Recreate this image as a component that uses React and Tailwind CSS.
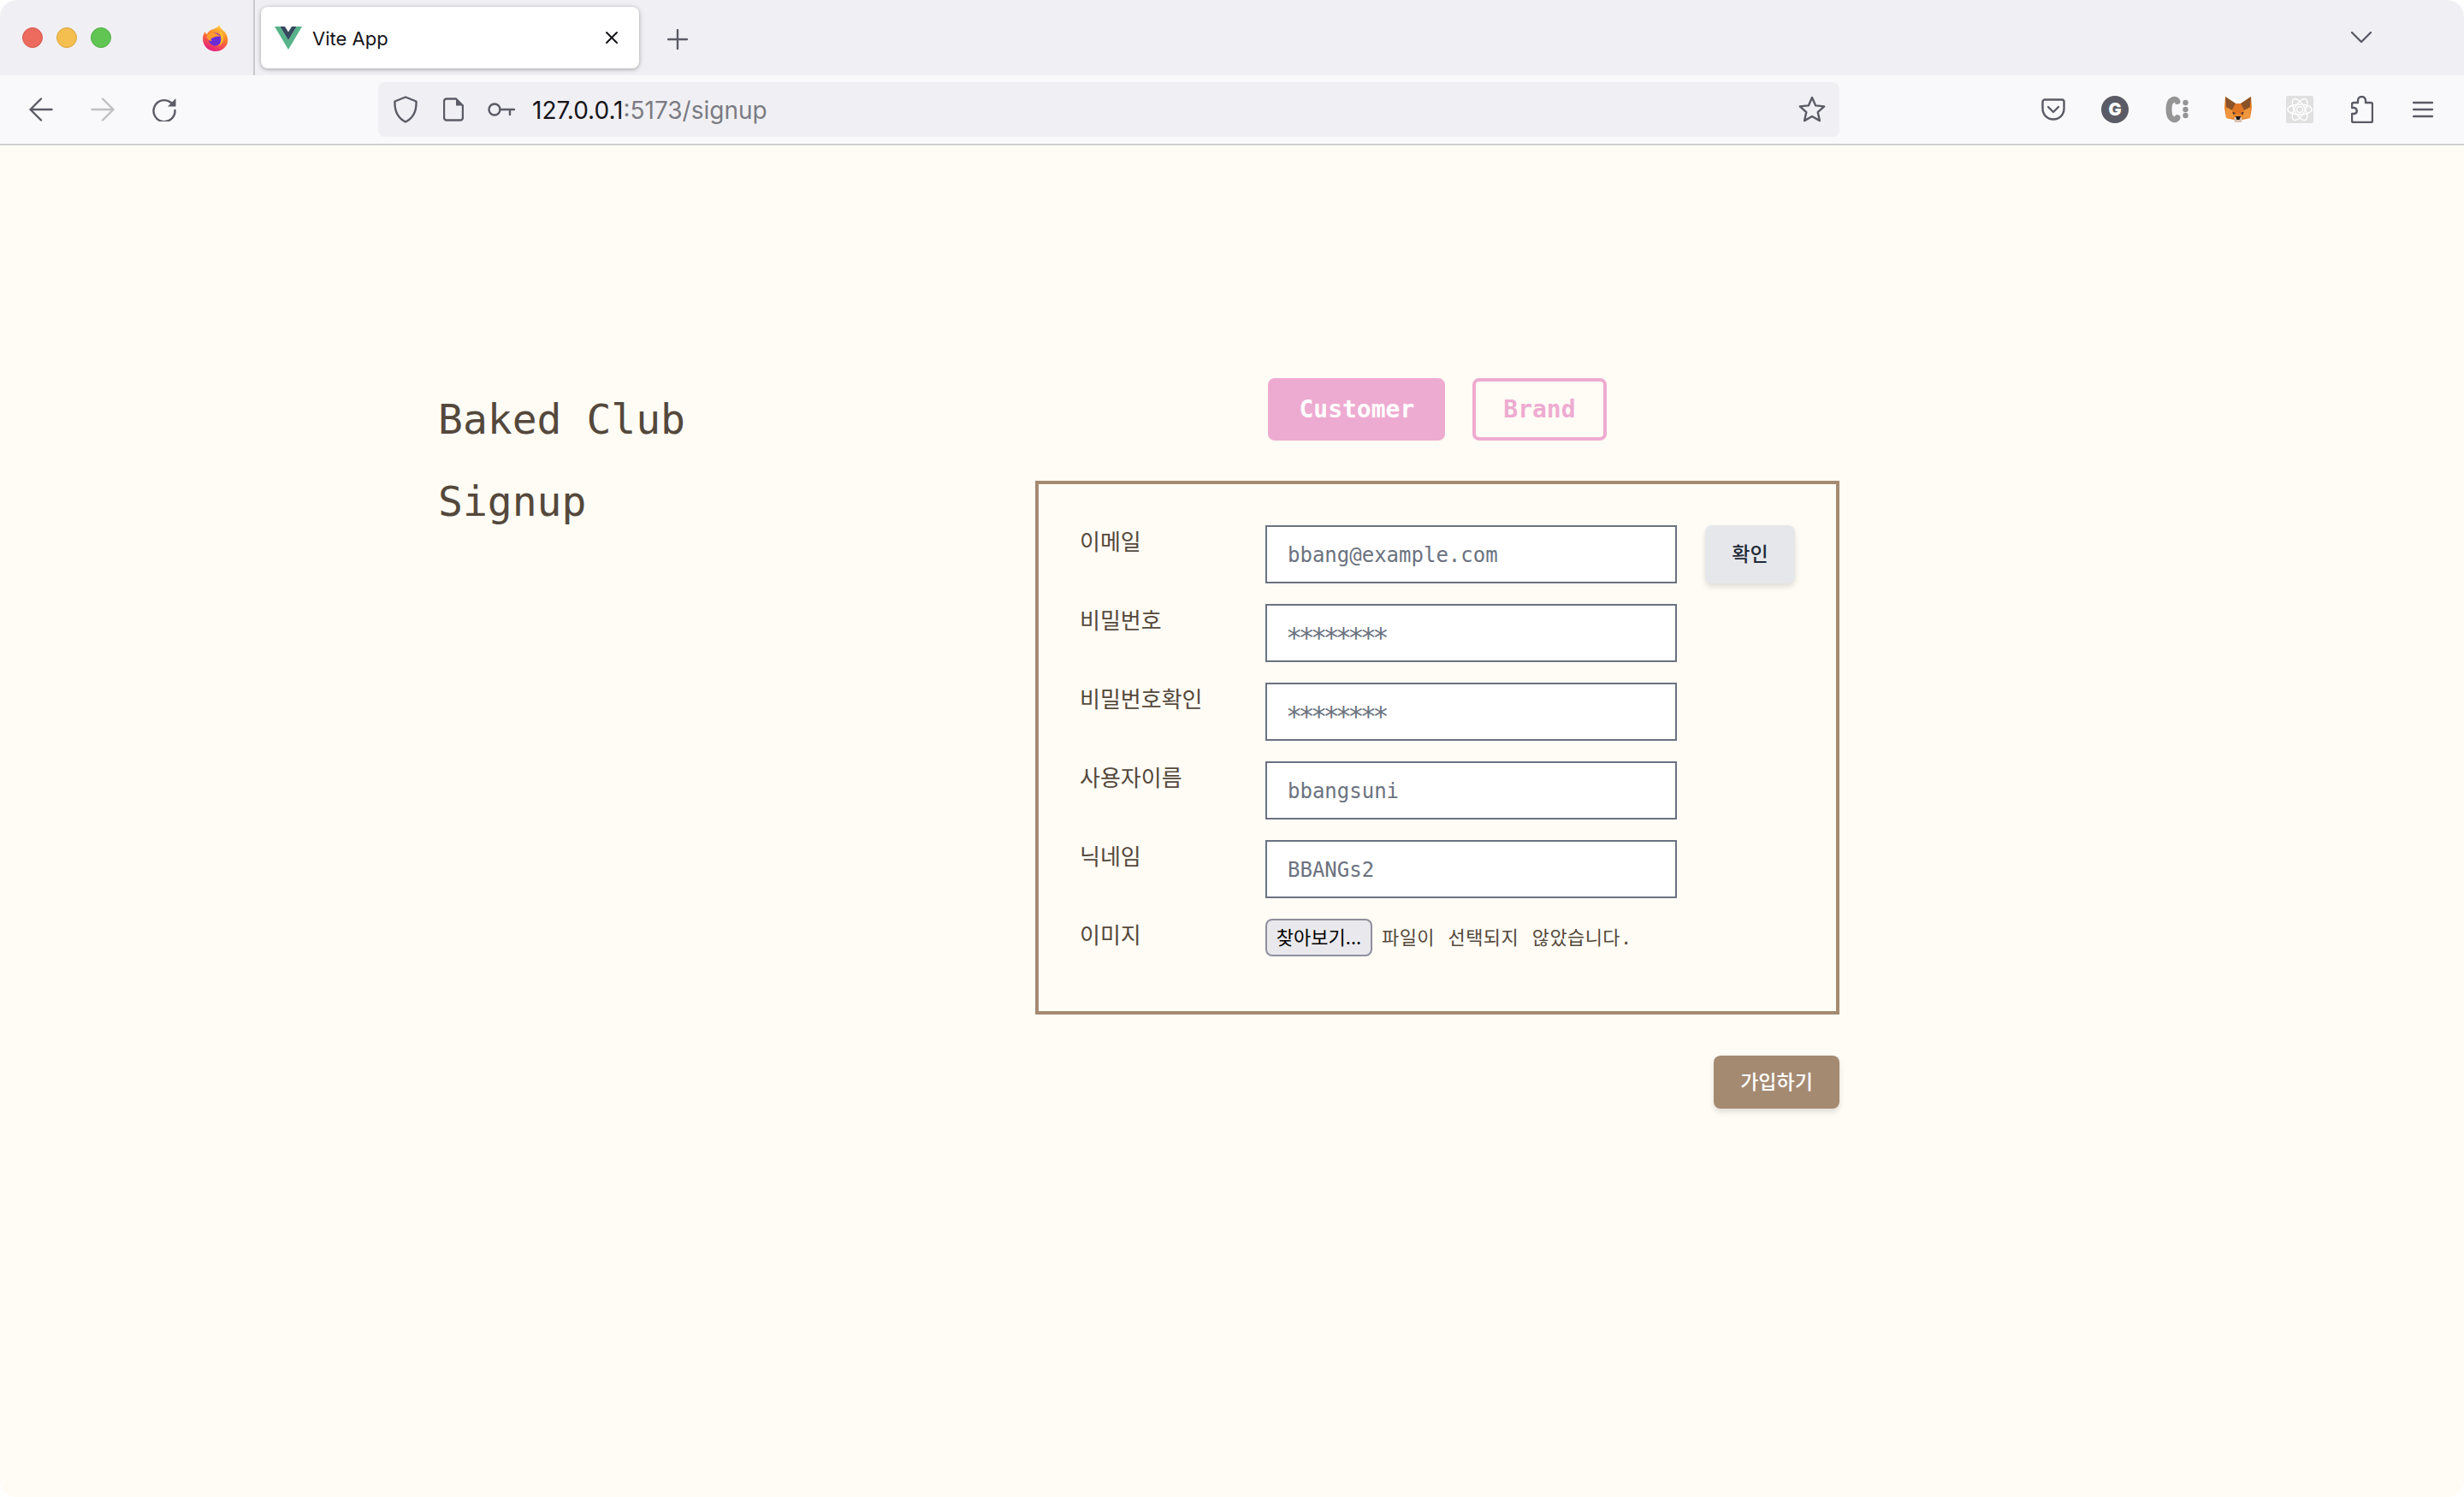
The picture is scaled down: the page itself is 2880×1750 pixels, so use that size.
const mono = { fontFamily: '"DejaVu Sans Mono", "Noto Sans CJK KR", monospace' };

const fields = [
  { label: '이메일', value: 'bbang@example.com', check: true },
  { label: '비밀번호', value: '********', secret: true },
  { label: '비밀번호확인', value: '********', secret: true },
  { label: '사용자이름', value: 'bbangsuni' },
  { label: '닉네임', value: 'BBANGs2' },
];

const FirefoxLogo = () => (
  <svg width="32" height="32" viewBox="0 0 32 32">
    <defs>
      <linearGradient id="fx" x1="0.7" y1="0" x2="0.3" y2="1">
        <stop offset="0" stopColor="#ffd23a" />
        <stop offset="0.45" stopColor="#ff7a2b" />
        <stop offset="1" stopColor="#e31587" />
      </linearGradient>
    </defs>
    <path d="M20 1c1 4 5 6 8 10 3 5 3 11 0 15-3 4-7 6-12 6C8 32 1 26 1 17c0-3 1-6 3-8 0 2 1 3 2 3 1-3 4-5 7-6 3-1 6-2 7-5z" fill="url(#fx)" />
    <circle cx="15.5" cy="18" r="7.5" fill="#6b2bd6" />
    <path d="M6 13c3-3 8-3 12-1 2 1 3 2 3 3-3-1-5 0-8 1-3 1-3 3-1 4-4 0-7-3-6-7z" fill="#ff9a2e" />
    <path d="M21 8c3 2 5 6 4 11-1 3-3 6-6 7 3-3 4-7 3-11-.4-3-1-5-1-7z" fill="#ffbd2e" />
  </svg>
);

const VueLogo = () => (
  <svg width="32" height="27" viewBox="0 0 32 27">
    <polygon points="0,0 6.4,0 16,16 25.6,0 32,0 16,27" fill="#56b38a" />
    <polygon points="6.4,0 12,0 16,6.5 20,0 25.6,0 16,16" fill="#35495e" />
  </svg>
);

const FoxLogo = () => (
  <svg width="32" height="32" viewBox="0 0 32 32">
    <polygon points="1,1 13,9 19,9 31,1 32,14 30,26 21,28 11,28 2,26 0,14" fill="#e8832a" />
    <polygon points="1,1 13,9 9,17 2,13" fill="#8a5228" />
    <polygon points="31,1 19,9 23,17 30,13" fill="#8a5228" />
    <polygon points="9,17 13,9 19,9 23,17 18,21 14,21" fill="#e27625" />
    <polygon points="7,18 13,20 11,22" fill="#45312a" />
    <polygon points="25,18 19,20 21,22" fill="#45312a" />
    <polygon points="2,14 9,17 11,26 2,26" fill="#f0963c" />
    <polygon points="30,14 23,17 21,26 30,26" fill="#f0963c" />
    <polygon points="11,26 14,24 18,24 21,26 20,31 12,31" fill="#d7c1b3" />
    <polygon points="13,24 19,24 17.5,28 14.5,28" fill="#161616" />
  </svg>
);

const ReactLogo = () => (
  <svg width="32" height="32" viewBox="0 0 32 32">
    <rect width="32" height="32" rx="2" fill="#e0e0e0" />
    <g fill="none" stroke="#ffffff" strokeWidth="1.4">
      <ellipse cx="16" cy="16" rx="14" ry="6" />
      <ellipse cx="16" cy="16" rx="14" ry="6" transform="rotate(60 16 16)" />
      <ellipse cx="16" cy="16" rx="14" ry="6" transform="rotate(120 16 16)" />
      <circle cx="16" cy="16" r="3.5" />
    </g>
  </svg>
);

const Stroke = ({ w, h, children, color = '#5b5b66', sw = 2.4 }) => (
  <svg width={w} height={h} viewBox={`0 0 ${w} ${h}`} fill="none" stroke={color} strokeWidth={sw} strokeLinecap="round" strokeLinejoin="round">
    {children}
  </svg>
);

const TabBar = () => (
  <div className="flex h-[88px] items-center bg-[#f0f0f4]">
    <div className="ml-[26px] flex gap-4">
      <span className="h-6 w-6 rounded-full border border-[#d8574c] bg-[#ec6a5e]" />
      <span className="h-6 w-6 rounded-full border border-[#d9a33f] bg-[#f5bf4f]" />
      <span className="h-6 w-6 rounded-full border border-[#50ad45] bg-[#61c554]" />
    </div>
    <div className="ml-[106px] flex h-8 w-8 items-center justify-center">
      <FirefoxLogo />
    </div>
    <div className="ml-[28px] h-full w-[2px] bg-[#c9c9cc]" />
    <div className="ml-[7px] flex h-[72px] w-[442px] items-center rounded-lg bg-white pl-4 pr-[24px] shadow-[0_1px_5px_rgba(0,0,0,0.35)]">
      <VueLogo />
      <span className="ml-3 mt-[2px] text-[22px] text-[#15141a]" style={{ fontFamily: 'Inter, sans-serif' }}>Vite App</span>
      <span className="ml-auto">
        <Stroke w={16} h={16} color="#15141a" sw={2}>
          <path d="M2 2l12 12M14 2L2 14" />
        </Stroke>
      </span>
    </div>
    <div className="ml-[33px] mt-[4px]">
      <Stroke w={24} h={24}>
        <path d="M12 1v22M1 12h22" />
      </Stroke>
    </div>
    <div className="ml-auto mr-[108px]">
      <Stroke w={24} h={14}>
        <path d="M1 1l11 11L23 1" />
      </Stroke>
    </div>
  </div>
);

const Toolbar = () => (
  <div className="flex h-[82px] items-center border-b-2 border-[#cfcfd0] bg-[#f9f9fb]">
    <div className="ml-[34px]">
      <Stroke w={28} h={28}>
        <path d="M1.5 14h25M14 1.5L1.5 14 14 26.5" />
      </Stroke>
    </div>
    <div className="ml-[44px]">
      <Stroke w={28} h={28} color="#bfbfc4">
        <path d="M1.5 14h25M14 1.5L26.5 14 14 26.5" />
      </Stroke>
    </div>
    <div className="ml-[44px]">
      <svg width="28" height="28" viewBox="0 0 28 28" fill="none">
        <path d="M22 6A12.5 12.5 0 1 0 26.5 15" stroke="#5b5b66" strokeWidth="2.4" strokeLinecap="round" />
        <polygon points="27.5,1 27.5,10.500 18,10.500" fill="#5b5b66" />
      </svg>
    </div>
    <div className="ml-[236px] flex h-16 w-[1708px] items-center rounded-lg bg-[#f0f0f4] pl-[18px] pr-[16px]">
      <Stroke w={28} h={32}>
        <path d="M14 1.500L26.500 6.500C27 17 23 26 14 30.500 5 26 1 17 1.500 6.500z" />
      </Stroke>
      <div className="ml-[30px]">
        <svg width="24" height="28" viewBox="0 0 24 28" fill="none">
          <path d="M15 1.500H4a3 3 0 0 0-3 3v19a3 3 0 0 0 3 3h16a3 3 0 0 0 3-3V9.500z" stroke="#5b5b66" strokeWidth="2.400" strokeLinejoin="round" />
          <polygon points="15,1.500 23,9.500 15,9.500" fill="#5b5b66" />
        </svg>
      </div>
      <div className="ml-[28px]">
        <Stroke w={32} h={16}>
          <circle cx="8" cy="8" r="6.500" />
          <path d="M14.500 8H31M26 8v6" />
        </Stroke>
      </div>
      <span className="ml-[20px] mt-[2px] text-[28px] leading-none text-[#15141a]" style={{ fontFamily: 'Inter, sans-serif' }}>
        127.0.0.1<span className="text-[#7b7b83]">:5173/signup</span>
      </span>
      <div className="ml-auto">
        <Stroke w={32} h={32}>
          <path d="M16 2l4.200 9.400 10 1-7.500 6.700 2.200 10L16 24l-8.900 5.100 2.200-10L1.800 12.400l10-1z" />
        </Stroke>
      </div>
    </div>
    <div className="ml-[236px]">
      <Stroke w={28} h={26}>
        <path d="M4 1.500h20a2.500 2.500 0 0 1 2.500 2.500v8C26.500 19 21 24.500 14 24.500S1.500 19 1.500 12V4A2.500 2.500 0 0 1 4 1.500z" />
        <path d="M8 10l6 6 6-6" />
      </Stroke>
    </div>
    <div className="ml-[42px] flex h-8 w-8 items-center justify-center rounded-full bg-[#5b5b66] text-[20px] font-black text-white" style={{ fontFamily: 'Inter, sans-serif' }}>
      G
    </div>
    <div className="ml-[42px]">
      <svg width="28" height="32" viewBox="0 0 28 32" fill="none">
        <path d="M15 6.500C14 3 5 2 5 16s9 13 10 9.500" stroke="#959595" strokeWidth="7" strokeLinecap="round" />
        <circle cx="24.500" cy="8" r="3.200" fill="#959595" />
        <circle cx="24.500" cy="16" r="3.200" fill="#959595" />
        <circle cx="24.500" cy="23" r="3.200" fill="#959595" />
      </svg>
    </div>
    <div className="ml-[42px]"><FoxLogo /></div>
    <div className="ml-10"><ReactLogo /></div>
    <div className="ml-[44px]">
      <Stroke w={26} h={32}>
        <path d="M3 31h20a2 2 0 0 0 2-2V10a2 2 0 0 0-2-2h-6V5.500C17 -0.500 8 -0.500 8 5.500V8H3a2 2 0 0 0-2 2v4h2c5 0 5 7 0 7H1v8a2 2 0 0 0 2 2z" />
      </Stroke>
    </div>
    <div className="ml-[46px]">
      <Stroke w={24} h={20}>
        <path d="M1 2h22M1 10h22M1 18h22" />
      </Stroke>
    </div>
  </div>
);

const Field = ({ label, value, check, secret }) => (
  <div className="flex h-[68px]">
    <label className="w-[217px] pt-[4px] text-[26px] leading-[32px] text-[#54483c]">{label}</label>
    <input
      readOnly
      value={value}
      className={
        secret
          ? 'h-[68px] w-[481px] border-2 border-[#6b7280] bg-white pl-[22px] pr-6 pt-[10px] text-[32px] tracking-[-4.8px] text-[#6b7280] outline-none'
          : 'h-[68px] w-[481px] border-2 border-[#6b7280] bg-white px-6 pt-[2px] text-2xl text-[#6b7280] outline-none'
      }
      style={mono}
    />
    {check && (
      <button className="ml-[33px] h-[68px] w-[105px] rounded-lg bg-[#e5e7eb] text-[23px] font-medium text-[#1f2937] shadow-[0_4px_6px_rgba(0,0,0,0.12)]">
        확인
      </button>
    )}
  </div>
);

export default function App() {
  return (
    <div className="flex min-h-[1750px] flex-col bg-white" style={mono}>
      <div className="overflow-hidden rounded-t-[20px]">
        <TabBar />
        <Toolbar />
      </div>
      <main className="flex flex-1 rounded-b-[20px] bg-[#fffcf5] pl-[512px] pt-[272px]">
        <div className="w-[698px] text-5xl leading-[48px] text-[#54483c]">
          <h1 className="mt-[24px]">Baked Club</h1>
          <h2 className="mt-[48px]">Signup</h2>
        </div>
        <div className="w-[940px]">
          <div className="flex justify-center gap-8">
            <button className="h-[73px] rounded-lg border-4 border-[#eeabd1] bg-[#eeabd1] px-8 text-[28px] font-bold text-white">
              Customer
            </button>
            <button className="h-[73px] rounded-lg border-4 border-[#eeabd1] px-8 text-[28px] font-bold text-[#eeabd1]">
              Brand
            </button>
          </div>
          <div className="mt-[47px] flex h-[624px] flex-col gap-6 border-4 border-[#a58a72] pl-[48px] pt-12">
            {fields.map((f) => (
              <Field key={f.label} {...f} />
            ))}
            <div className="flex">
              <label className="w-[217px] pt-[4px] text-[26px] leading-[32px] text-[#54483c]">이미지</label>
              <button
                className="h-[44px] w-[125px] rounded-lg border-2 border-[#8f8f9d] bg-[#e9e9ed] pb-[3px] text-[22px] text-black"
                style={{ fontFamily: '"Noto Sans CJK KR", sans-serif' }}
              >
                찾아보기...
              </button>
              <span className="ml-[11px] self-center text-[22px] tracking-[0.4px] text-[#54483c] [word-spacing:2px]">
                파일이 선택되지 않았습니다.
              </span>
            </div>
          </div>
          <div className="mt-12 flex justify-end">
            <button className="h-[62px] w-[147px] rounded-lg bg-[#a58a72] text-[23px] font-medium text-white shadow-[0_4px_6px_rgba(0,0,0,0.12)]">
              가입하기
            </button>
          </div>
        </div>
      </main>
    </div>
  );
}
